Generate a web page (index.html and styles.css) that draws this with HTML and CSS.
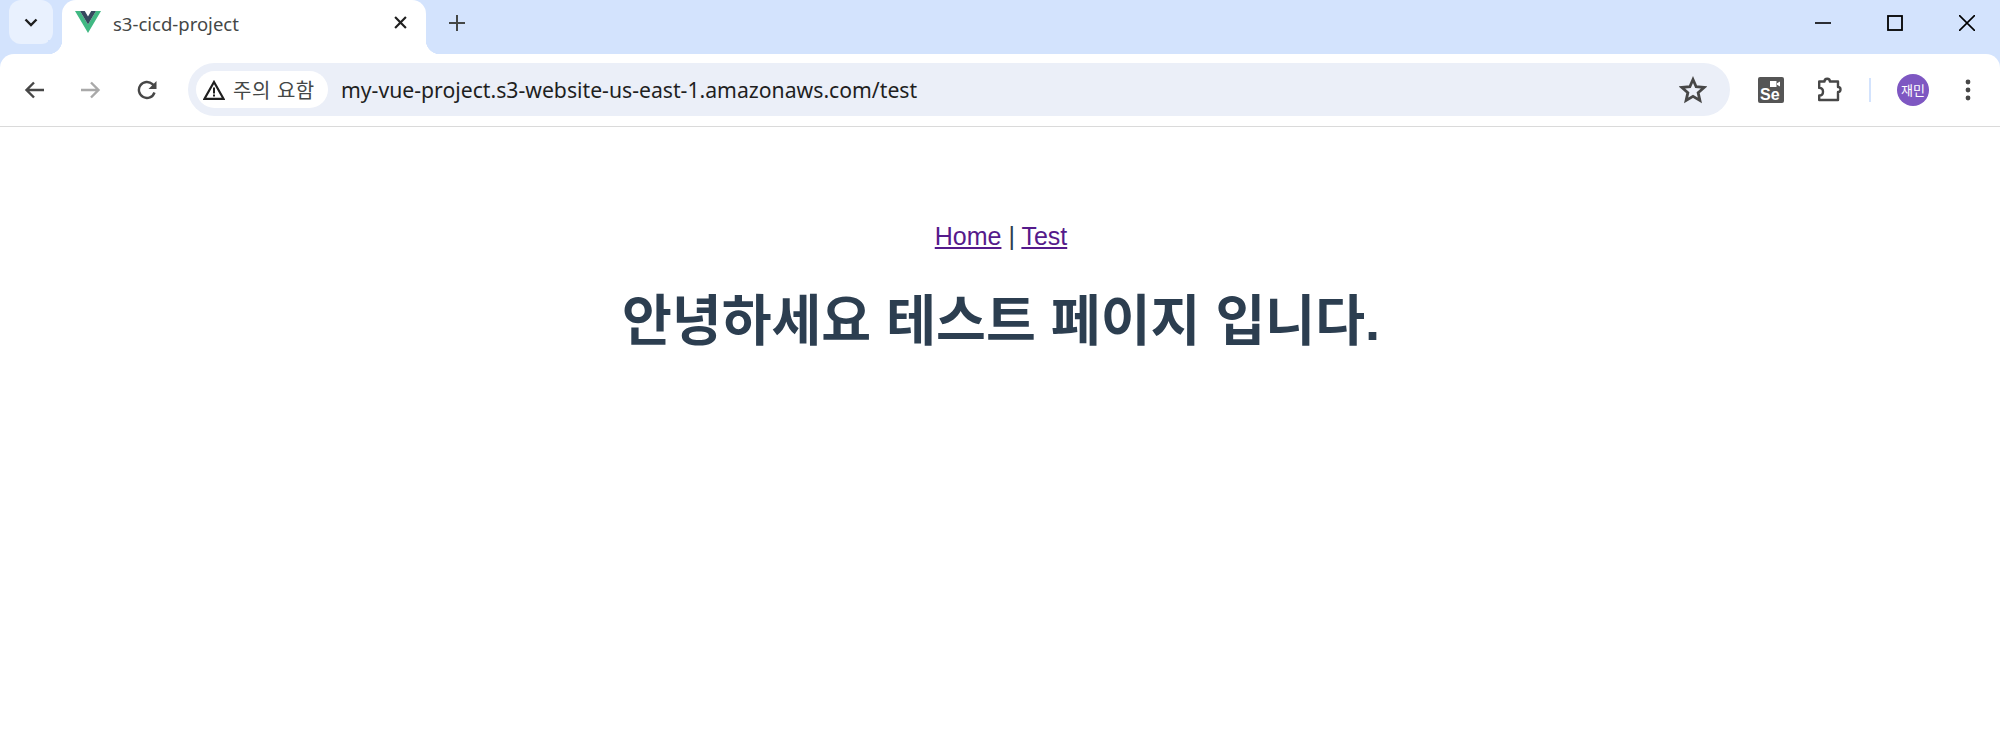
FILE: index.html
```html
<!DOCTYPE html>
<html lang="ko">
<head>
<meta charset="utf-8">
<title>s3-cicd-project</title>
<link rel="stylesheet" href="styles.css">
</head>
<body>
<header class="browser">
  <div class="tabstrip">
    <div class="tabsearch">
      <svg class="ic16" viewBox="0 0 16 16"><path d="M2.500 5.500 8 11l5.500-5.500" fill="none" stroke="#1f1f1f" stroke-width="2.400"/></svg>
    </div>
    <div class="tab">
      <svg class="favicon" viewBox="0 0 26 22"><path d="M0 0h5l8 13.500L21 0h5L13 22z" fill="#41b883"/><path d="M5 0h4.800L13 5.500 16.200 0H21l-8 13.500z" fill="#35495e"/></svg>
      <span class="tabtitle">s3-cicd-project</span>
      <svg class="tabclose" viewBox="0 0 12 12"><path d="M1 1l10 10M11 1 1 11" fill="none" stroke="#1f1f1f" stroke-width="2"/></svg>
    </div>
    <svg class="newtab" viewBox="0 0 16 16"><path d="M8 0v16M0 8h16" fill="none" stroke="#444746" stroke-width="2"/></svg>
    <div class="winctl">
      <svg class="winbtn" viewBox="0 0 16 16"><path d="M0 8h16" stroke="#000" stroke-width="1.600"/></svg>
      <svg class="winbtn" viewBox="0 0 16 16"><rect x="1" y="1" width="14" height="14" fill="none" stroke="#000" stroke-width="1.800"/></svg>
      <svg class="winbtn" viewBox="0 0 16 16"><path d="M0 0l16 16M16 0 0 16" stroke="#000" stroke-width="1.600"/></svg>
    </div>
  </div>
  <div class="toolbar">
    <svg class="navic nav-back" viewBox="0 0 20 20"><path d="M20 10H2M10 2.500 2.500 10l7.500 7.500" fill="none" stroke="#474747" stroke-width="2.400"/></svg>
    <svg class="navic nav-fwd" viewBox="0 0 20 20"><path d="M0 10h18M10 2.500 17.500 10 10 17.500" fill="none" stroke="#a9a9a9" stroke-width="2.400"/></svg>
    <svg class="navic nav-reload" viewBox="0 0 20 20"><path d="M17.500 12.500A8 8 0 1 1 15.500 4.200L18 6.800" fill="none" stroke="#474747" stroke-width="2.400"/><path d="M19.500 1v8h-8z" fill="#474747"/></svg>
    <div class="omnibox">
      <div class="chip">
        <svg class="warn" viewBox="0 0 22 20"><path d="M11 2 20.500 18.800H1.500z" fill="none" stroke="#1f1f1f" stroke-width="2.200"/><path d="M11 7.500v6M11 14.500v2" stroke="#1f1f1f" stroke-width="2"/></svg>
        <span class="chiptext">주의 요함</span>
      </div>
      <span class="url">my-vue-project.s3-website-us-east-1.amazonaws.com/test</span>
      <svg class="star" viewBox="0 0 24 24"><path d="M12 3l2.700 6.200 6.800.6-5.100 4.500 1.500 6.600L12 17.400l-5.900 3.500 1.500-6.600L2.500 9.800l6.800-.6z" fill="none" stroke="#474747" stroke-width="2.400"/></svg>
    </div>
    <div class="tools">
      <div class="selenium">
        <svg class="camera" viewBox="0 0 10 6"><path d="M0 0h6.500v6H0zM7 2.200 10 .5v5L7 3.800z" fill="#fff"/></svg>
        <span class="setext">Se</span>
      </div>
      <svg class="puzzle" viewBox="0 0 26 26"><path d="M2.200 4.500H7.500a2.700 2.700 0 0 1 5.400 0H21v5.500a2.500 2.500 0 0 1 0 5V23H2.200v-4.500c2.500 0 3.800-1.800 3.800-3.800s-1.300-3.800-3.800-3.800z" fill="none" stroke="#474747" stroke-width="2.400" stroke-linejoin="round"/></svg>
      <span class="divider"></span>
      <span class="avatar">재민</span>
      <svg class="kebab" viewBox="0 0 6 22"><circle cx="3" cy="3" r="2.400" fill="#474747"/><circle cx="3" cy="11" r="2.400" fill="#474747"/><circle cx="3" cy="19" r="2.400" fill="#474747"/></svg>
    </div>
  </div>
</header>
<main class="page">
  <nav class="links"><a href="#home">Home</a> | <a href="#test">Test</a></nav>
  <h1 class="title">안녕하세요 테스트 페이지 입니다.</h1>
</main>
</body>
</html>
```
FILE: styles.css
```css
* { box-sizing: border-box; }
html, body { margin: 0; height: 100%; background: #fff; }
body { font-family: "Liberation Sans", "Noto Sans CJK KR", sans-serif; overflow: hidden; }
a { color: #551a8b; }
svg { display: block; flex: none; }

.browser { background: #d3e3fd; }
.tabstrip { height: 54px; display: flex; align-items: flex-start; }
.tabsearch { width: 44px; height: 44px; margin-left: 9px; background: #e9f1fe; border-radius: 12px; display: flex; align-items: center; justify-content: center; }
.ic16 { width: 16px; height: 16px; }
.tab { width: 364px; height: 54px; margin-left: 9px; background: #fff; border-radius: 14px 14px 0 0; display: flex; align-items: center; position: relative; padding: 0 19px 0 13px; }
.tab::before, .tab::after { content: ""; position: absolute; bottom: 0; width: 14px; height: 14px; }
.tab::before { left: -14px; background: radial-gradient(circle at 0 0, #d3e3fd 14px, #fff 14.500px); }
.tab::after { right: -14px; background: radial-gradient(circle at 100% 0, #d3e3fd 14px, #fff 14.500px); }
.favicon { width: 26px; height: 22px; margin-top: -10px; }
.tabtitle { font: 18.500px/26px "Noto Sans", "Open Sans", sans-serif; color: #444746; margin-left: 12px; margin-top: -6px; flex: 1; }
.tabclose { width: 13px; height: 13px; margin-top: -10px; }
.newtab { width: 16px; height: 16px; margin: 15px 0 0 23px; }
.winctl { margin-left: auto; display: flex; align-items: center; height: 46px; gap: 56px; padding-right: 25px; }
.winbtn { width: 16px; height: 16px; }

.toolbar { height: 73px; background: #fff; border-radius: 14px 14px 0 0; border-bottom: 1px solid #dadada; display: flex; align-items: center; padding-left: 24px; }
.navic { width: 20px; height: 20px; }
.nav-fwd { margin-left: 37px; }
.nav-reload { margin-left: 36px; }
.omnibox { width: 1542px; height: 53px; margin-left: 31px; margin-bottom: 1px; background: #ebeff8; border-radius: 27px; display: flex; align-items: center; padding: 0 23px 0 8px; }
.chip { width: 132px; height: 37px; background: #fff; border-radius: 19px; display: flex; align-items: center; padding-left: 7px; }
.warn { width: 22px; height: 20px; }
.chiptext { font: 20px "Noto Sans CJK KR", sans-serif; color: #444746; margin-left: 8px; letter-spacing: .5px; }
.url { font: 21.200px "Noto Sans", "Open Sans", sans-serif; color: #1f1f1f; margin-left: 13px; flex: 1; }
.star { width: 28px; height: 28px; }
.tools { display: flex; align-items: center; margin-left: 28px; margin-bottom: 1px; }
.selenium { width: 26px; height: 26px; background: #555; border-radius: 2px; position: relative; display: flex; align-items: flex-end; padding-left: 2px; }
.camera { position: absolute; right: 4px; top: 4px; width: 10px; height: 6px; }
.setext { font: bold 16px/17px "Liberation Sans", sans-serif; color: #fff; }
.puzzle { width: 26px; height: 26px; margin-left: 33px; }
.divider { width: 2px; height: 24px; background: #d3e3fd; margin-left: 26px; }
.avatar { width: 32px; height: 32px; border-radius: 50%; background: #7e57c2; color: #fff; font: 13px/32px "Noto Sans CJK KR", sans-serif; text-align: center; margin-left: 26px; }
.kebab { width: 6px; height: 22px; margin-left: 36px; }

.page { text-align: center; color: #2c3e50; padding: 85px 0 0 2px; }
.links { font-size: 25px; line-height: 48px; }
.title { font-size: 54.200px; font-weight: 700; margin: 0; line-height: 64px; padding-top: 29px; }
```
